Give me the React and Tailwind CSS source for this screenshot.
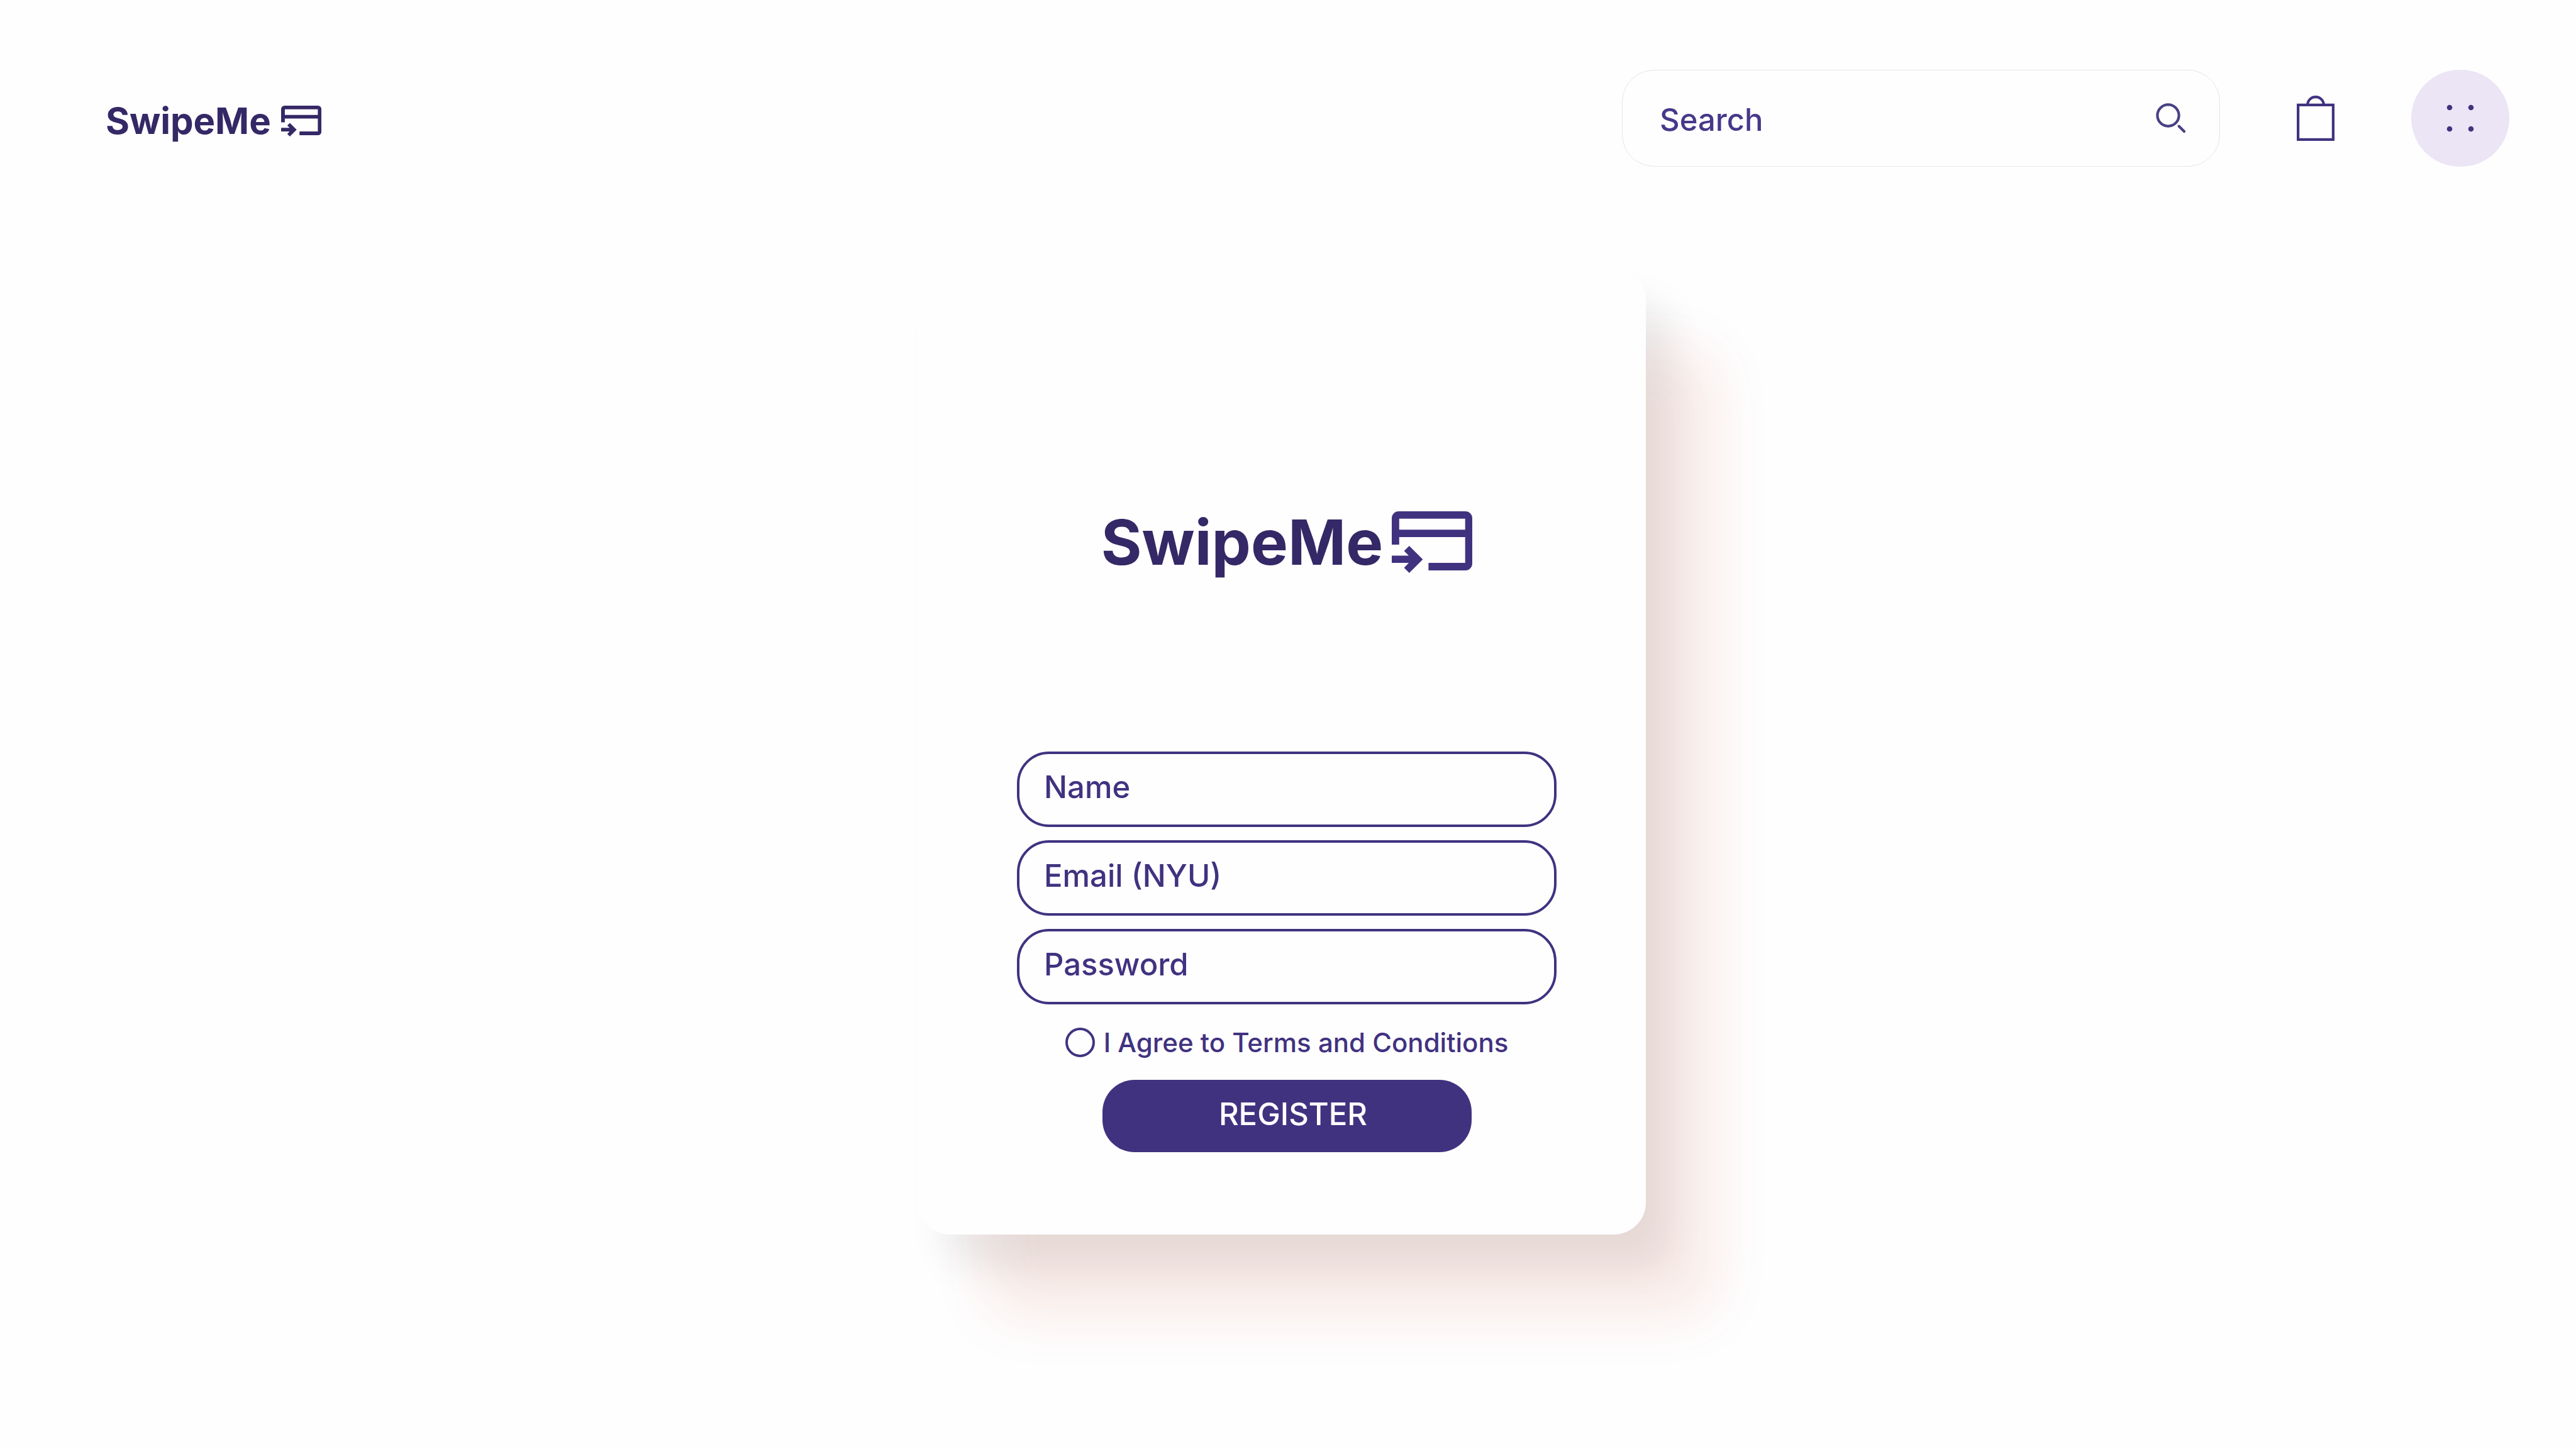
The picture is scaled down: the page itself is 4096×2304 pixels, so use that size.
function CardArrow({ className }) {
  return (
    <svg viewBox="0 0 128 98" className={className} fill="currentColor" aria-hidden="true">
      <path
        fillRule="evenodd"
        d="M11 0H117A11 11 0 0 1 128 11V83A11 11 0 0 1 117 94H58.4V82.1H116.7V41H11.8V53H0V11A11 11 0 0 1 11 0ZM11.8 11.7V29.3H116.7V11.7Z"
      />
      <path d="M0 70.4H27L19.6 62.9L27.8 54.9L49.4 76.4L27.8 98L19.6 89.8L27 82.1H0Z" />
    </svg>
  );
}

function SearchIcon() {
  return (
    <svg viewBox="0 0 48 48" className="size-12" fill="none" stroke="#484183" strokeWidth="4.2" aria-hidden="true">
      <circle cx="19.5" cy="19.5" r="17.1" />
      <path d="M36.7 36.7L45 45" strokeLinecap="round" />
    </svg>
  );
}

function BagIcon() {
  return (
    <svg viewBox="0 0 60 72" className="h-[72px] w-[60px]" fill="none" stroke="currentColor" strokeWidth="4.2" aria-hidden="true">
      <path d="M2.1 14.9H57.9V69.9H2.1Z" />
      <path d="M17.1 15a12.9 12.9 0 0 1 25.8 0" />
    </svg>
  );
}

function DotsIcon() {
  return (
    <svg viewBox="0 0 44 44" className="size-11" fill="currentColor" aria-hidden="true">
      <circle cx="5" cy="5" r="4.3" />
      <circle cx="39" cy="5" r="4.3" />
      <circle cx="5" cy="39" r="4.3" />
      <circle cx="39" cy="39" r="4.3" />
    </svg>
  );
}

const fields = [
  { id: "name", label: "Name", type: "text" },
  { id: "email", label: "Email (NYU)", type: "email" },
  { id: "password", label: "Password", type: "password" },
];

function Header() {
  return (
    <header className="flex items-center justify-between pt-[111px] pr-[106px] pl-[168px]">
      <a href="#" className="flex items-center gap-4 pt-2 text-[#352866]">
        <span className="text-[58px] leading-[72px] font-bold">SwipeMe</span>
        <CardArrow className="h-[49px] w-16" />
      </a>
      <div className="flex items-center gap-[122px]">
        <form className="flex h-[154px] w-[951px] items-center rounded-[51px] border border-[#e6e6e6] pr-[53px] pl-[59px]">
          <input
            type="search"
            aria-label="Search"
            placeholder="Search"
            className="min-w-0 flex-1 bg-transparent pt-1.5 text-[49px] leading-[60px] font-[550] text-[#47388a] outline-none placeholder:text-[#47388a] placeholder:opacity-100"
          />
          <button type="button" aria-label="Submit search">
            <SearchIcon />
          </button>
        </form>
        <button type="button" aria-label="Shopping bag">
          <BagIcon />
        </button>
        <button type="button" aria-label="Menu" className="flex h-[154px] w-[156px] items-center justify-center rounded-full bg-[#ebe5f5]">
          <DotsIcon />
        </button>
      </div>
    </header>
  );
}

function RegisterCard() {
  return (
    <form className="flex w-[1158px] flex-col items-center rounded-[51px] bg-[#fefefe] pt-[375px] pb-[131px] pl-4 shadow-[40px_52px_60px_rgba(0,0,0,0.075),110px_130px_90px_rgba(200,60,30,0.1)]">
      <h1 className="flex items-center gap-3.5">
        <span className="text-[99px] leading-[120px] font-bold text-[#352866]">SwipeMe</span>
        <CardArrow className="h-[98px] w-32" />
      </h1>
      <div className="mt-[273px] flex w-[858px] flex-col gap-[21px]">
        {fields.map(({ id, label, type }) => (
          <input
            key={id}
            id={id}
            type={type}
            aria-label={label}
            placeholder={label}
            className="h-[120px] w-full rounded-[51px] border-4 border-[#413280] bg-transparent px-[39px] pb-2 text-[49px] leading-[60px] font-[550] text-[#413280] outline-none placeholder:text-[#413280] placeholder:opacity-100"
          />
        ))}
      </div>
      <label className="mt-[37px] flex items-center gap-3.5 text-[42px] leading-[47px] font-[550] text-[#413280]">
        <input type="checkbox" className="size-[47px] appearance-none rounded-full border-4 border-[#413280] checked:bg-[#413280]" />
        I Agree to Terms and Conditions
      </label>
      <button
        type="submit"
        className="mt-9 h-[115px] w-[587px] rounded-[51px] bg-[#413280] pb-1.5 pl-5 text-[49px] leading-[60px] font-[550] text-white"
      >
        REGISTER
      </button>
    </form>
  );
}

export default function App() {
  return (
    <div className="min-h-screen bg-[#fefefe] font-['Inter',sans-serif] text-[#413280]">
      <Header />
      <main className="flex justify-center pt-[162px] pr-5">
        <RegisterCard />
      </main>
    </div>
  );
}
